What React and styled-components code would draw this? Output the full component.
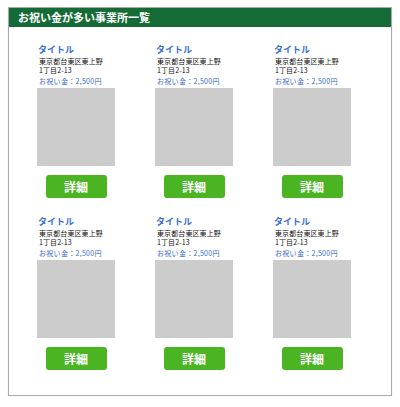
import React from 'react'
import styled, { createGlobalStyle } from 'styled-components'

const GlobalStyle = createGlobalStyle`
  body {
    margin: 0;
    background: #fff;
    font-family: "Noto Sans CJK JP", "Noto Sans", sans-serif;
  }
`

const Page = styled.div`
  padding: 7px 0 0 8px;
`

const Box = styled.section`
  box-sizing: border-box;
  width: 384px;
  border: 1px solid #a9a9a9;
  box-shadow: 0 1px 1px rgba(0, 0, 0, 0.15);
  background: #fff;
`

const Heading = styled.h2`
  margin: 0;
  height: 19px;
  line-height: 19px;
  padding-left: 9px;
  background: #146b36;
  color: #fff;
  font-size: 11px;
  font-weight: bold;
`

const Grid = styled.div`
  display: grid;
  grid-template-columns: repeat(3, 78px);
  column-gap: 40px;
  row-gap: 18px;
  padding: 17px 0 25px 28px;
`

const Card = styled.article`
  display: flex;
  flex-direction: column;
`

const Title = styled.h3`
  margin: 0 0 0 1px;
  font-size: 9px;
  line-height: 12px;
  font-weight: bold;
  color: #3a6fd0;
`

const Address = styled.p`
  margin: 1px 0 0 2px;
  font-size: 7px;
  line-height: 9px;
  letter-spacing: 0.1px;
  color: #111;
`

const Price = styled.p`
  margin: 2px 0 0 2px;
  font-size: 7px;
  line-height: 9px;
  letter-spacing: 0.3px;
  color: #3568cc;
`

const Thumb = styled.div`
  width: 78px;
  height: 78px;
  margin-top: 2px;
  background: #cccccc;
`

const DetailButton = styled.button`
  display: block;
  width: 61px;
  height: 23px;
  margin: 9px auto 0;
  border: 0;
  border-radius: 3px;
  background: #4bb423;
  color: #fff;
  font-family: inherit;
  font-size: 12px;
  font-weight: bold;
  padding: 0;
  cursor: pointer;
`

const offices = Array.from({ length: 6 }, (_, i) => ({
  id: i,
  title: 'タイトル',
  address: ['東京都台東区東上野', '1丁目2-13'],
  price: 'お祝い金：2,500円',
}))

export default function App() {
  return (
    <Page>
      <GlobalStyle />
      <Box>
        <Heading>お祝い金が多い事業所一覧</Heading>
        <Grid>
          {offices.map((o) => (
            <Card key={o.id}>
              <Title>{o.title}</Title>
              <Address>
                {o.address[0]}
                <br />
                {o.address[1]}
              </Address>
              <Price>{o.price}</Price>
              <Thumb />
              <DetailButton>詳細</DetailButton>
            </Card>
          ))}
        </Grid>
      </Box>
    </Page>
  )
}
